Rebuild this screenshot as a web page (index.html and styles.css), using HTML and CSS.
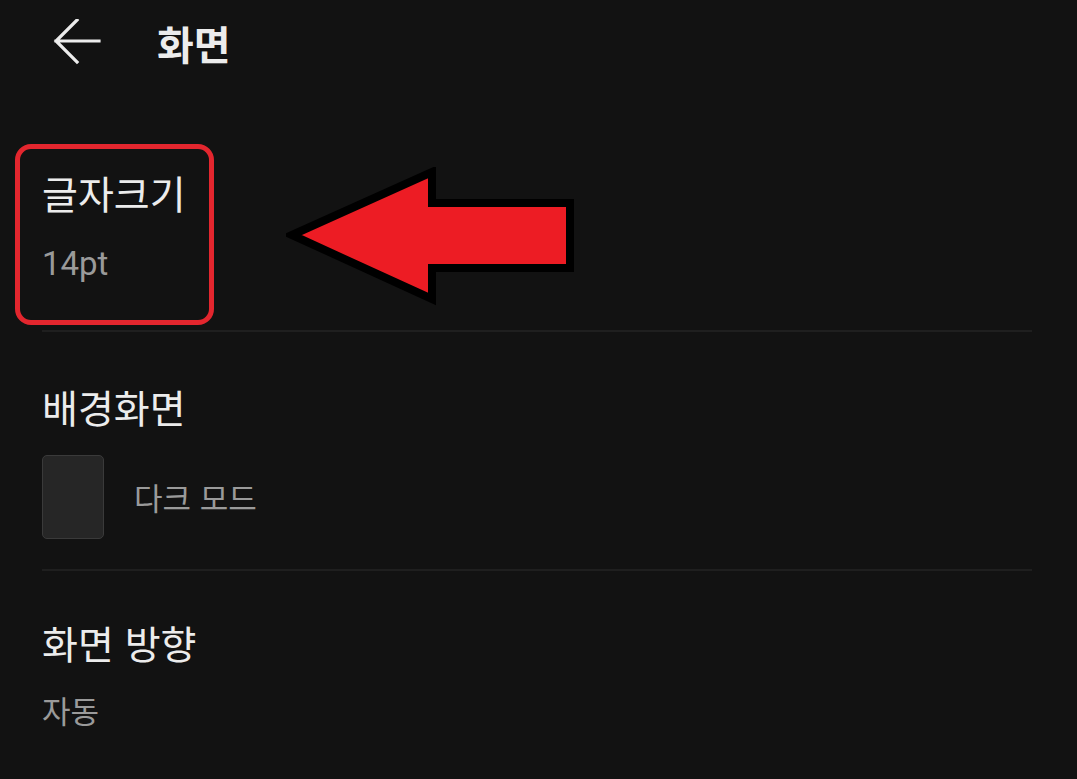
FILE: index.html
```html
<!DOCTYPE html>
<html lang="ko">
<head>
<meta charset="utf-8">
<link rel="stylesheet" href="styles.css">
</head>
<body>
<div class="screen">
  <header class="appbar">
    <svg class="back" width="48" height="48" viewBox="0 0 48 48" aria-hidden="true">
      <path d="M46 22 H3 M24 1 L3 22 L24 43" fill="none" stroke="#ececec" stroke-width="3.2" stroke-linecap="square" stroke-linejoin="miter"/>
    </svg>
    <h1 class="title">화면</h1>
  </header>

  <main class="list">
    <section class="item item-font">
      <div class="item-title">글자크기</div>
      <div class="item-sub latin">14pt</div>
      <div class="highlight"></div>
      <svg class="pointer" width="300" height="148" viewBox="0 0 300 148" aria-hidden="true">
        <polygon points="6,68 146,5 146,36 284,36 284,101 146,101 146,132" fill="#ed1c24" stroke="#000" stroke-width="8" stroke-linejoin="miter"/>
      </svg>
    </section>
    <div class="divider"></div>

    <section class="item item-bg">
      <div class="item-title">배경화면</div>
      <div class="mode-row">
        <div class="swatch"></div>
        <div class="item-sub">다크 모드</div>
      </div>
    </section>
    <div class="divider"></div>

    <section class="item item-orient">
      <div class="item-title">화면 방향</div>
      <div class="item-sub">자동</div>
    </section>
  </main>
</div>
</body>
</html>
```

FILE: styles.css
```css
* { box-sizing: border-box; }
html, body {
  margin: 0;
  padding: 0;
  background: #121212;
}
body {
  font-family: "Noto Sans CJK KR", "Noto Sans", sans-serif;
  color: #ececec;
}
.screen {
  width: 1077px;
  height: 779px;
  overflow: hidden;
  background: #121212;
}
.appbar {
  display: flex;
  align-items: center;
  height: 86px;
  padding-left: 53px;
}
.back {
  flex: none;
  display: block;
}
.title {
  margin: 0 0 0 56px;
  font-size: 40px;
  font-weight: 700;
  line-height: 48px;
  color: #ececec;
}
.list {
  padding: 0 45px 0 42px;
}
.item {
  position: relative;
}
.item-font {
  padding-top: 82px;
  height: 244px;
}
.item-bg {
  padding-top: 50px;
  height: 237px;
}
.item-orient {
  padding-top: 47px;
}
.item-title {
  font-size: 39px;
  line-height: 48px;
  color: #ececec;
  font-weight: 400;
}
.item-sub {
  font-size: 31px;
  line-height: 40px;
  color: #9a9a9a;
  margin-top: 24px;
}
.latin {
  font-family: Roboto, "Noto Sans CJK KR", sans-serif;
  font-size: 33px;
  margin-top: 28px;
}
.divider {
  height: 2px;
  background: #1f1f1f;
}
.mode-row {
  display: flex;
  align-items: center;
  gap: 30px;
  margin-top: 25px;
}
.mode-row .item-sub {
  margin-top: 0;
}
.swatch {
  width: 62px;
  height: 84px;
  border-radius: 5px;
  background: #262626;
  border: 1px solid #3a3a3a;
}
.highlight {
  position: absolute;
  left: -27px;
  top: 58px;
  width: 199px;
  height: 181px;
  border: 5px solid #e3262e;
  border-radius: 16px;
}
.pointer {
  position: absolute;
  left: 244px;
  top: 81px;
}
```
